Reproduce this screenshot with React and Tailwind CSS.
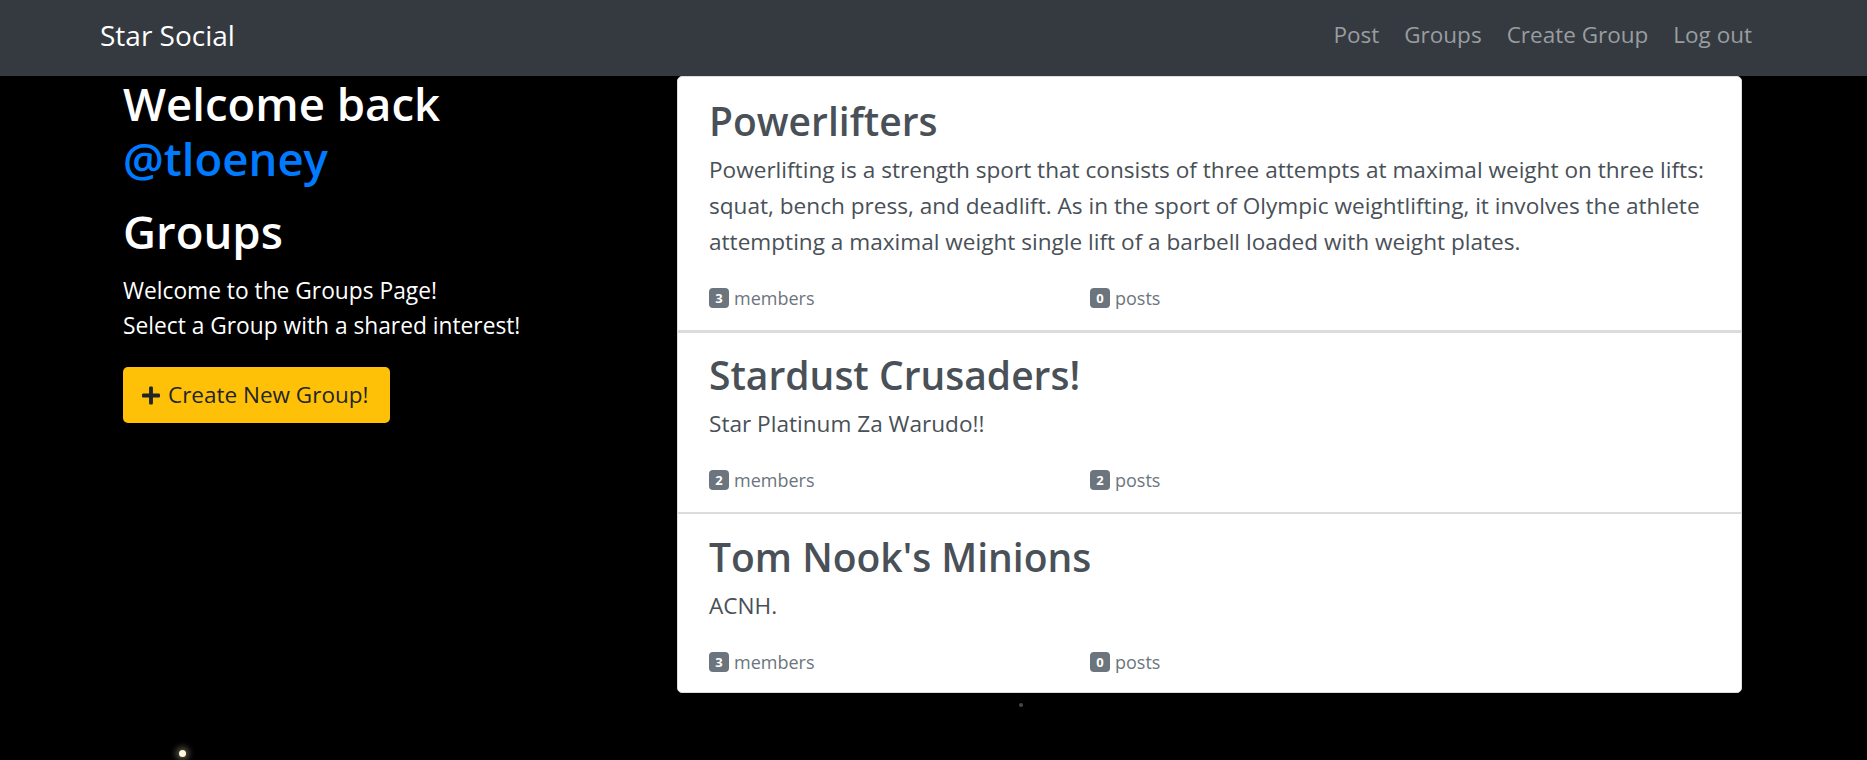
import React from 'react';

const groups = [
    {
        name: 'Powerlifters',
        description:
            'Powerlifting is a strength sport that consists of three attempts at maximal weight on three lifts: squat, bench press, and deadlift. As in the sport of Olympic weightlifting, it involves the athlete attempting a maximal weight single lift of a barbell loaded with weight plates.',
        members: 3,
        posts: 0,
    },
    { name: 'Stardust Crusaders!', description: 'Star Platinum Za Warudo!!', members: 2, posts: 2 },
    { name: "Tom Nook's Minions", description: 'ACNH.', members: 3, posts: 0 },
];

function PlusIcon() {
    return (
        <svg viewBox="0 0 448 512" className="h-[21px] w-[18px]" fill="currentColor">
            <path d="M416 208H272V64c0-17.67-14.33-32-32-32h-32c-17.67 0-32 14.33-32 32v144H32c-17.67 0-32 14.33-32 32v32c0 17.67 14.33 32 32 32h144v144c0 17.67 14.33 32 32 32h32c17.67 0 32-14.33 32-32V304h144c17.67 0 32-14.33 32-32v-32c0-17.67-14.33-32-32-32z" />
        </svg>
    );
}

function Badge({ value }) {
    return (
        <span className="inline-flex h-[20px] min-w-[20px] items-center justify-center rounded-[4px] bg-[#6c757d] px-[5px] text-[13px] font-bold leading-none text-white">
            {value}
        </span>
    );
}

export default function App() {
    const navLinks = ['Post', 'Groups', 'Create Group', 'Log out'];

    return (
        <div className="relative min-h-screen bg-black font-['Open_Sans',sans-serif]">
            {/* navbar */}
            <nav className="flex h-[76px] items-center justify-between bg-[#343a40] pb-[7px] pl-[100px] pr-[115px]">
                <span className="text-[28px] text-white">Star Social</span>
                <div className="flex items-center gap-[25px] text-[22.5px] text-[#9a9da0]">
                    {navLinks.map((link) => (
                        <span key={link}>{link}</span>
                    ))}
                </div>
            </nav>

            <main className="flex pl-[123px]">
                {/* left column */}
                <div className="w-[554px] shrink-0 text-white">
                    <h1 className="text-[45.5px] font-semibold leading-[55px]">
                        Welcome back
                        <br />
                        <span className="text-[#007bff]">@tloeney</span>
                    </h1>
                    <h1 className="mt-[18px] text-[45.5px] font-semibold leading-[55px]">Groups</h1>
                    <div className="mt-[14px] text-[22.75px] leading-[35px]">
                        <p>Welcome to the Groups Page!</p>
                        <p>Select a Group with a shared interest!</p>
                    </div>
                    <button
                        type="button"
                        className="mt-[24px] flex h-[56px] w-[267px] items-center gap-[8px] rounded-[5px] bg-[#ffc107] pl-[19px] text-[22.5px] text-[#212529]"
                    >
                        <PlusIcon />
                        Create New Group!
                    </button>
                </div>

                {/* groups list */}
                <div className="w-[1065px] shrink-0 overflow-hidden rounded-[5px] border border-[#dcdcdc] bg-white">
                    {groups.map((group, i) => (
                        <div
                            key={group.name}
                            className={
                                i === 0
                                    ? 'pb-[17px] pl-[31px] pr-[24px] pt-[20px]'
                                    : i === 1
                                      ? 'border-t-[3px] border-[#dcdcdc] pb-[17px] pl-[31px] pr-[24px] pt-[18px]'
                                      : 'border-t-2 border-[#dcdcdc] pb-[15px] pl-[31px] pr-[24px] pt-[19px]'
                            }
                        >
                            <h2 className="text-[39px] font-semibold leading-[48px] text-[#495057]">{group.name}</h2>
                            <p className="mt-[7px] text-[22.6px] leading-[36px] text-[#495057]">{group.description}</p>
                            <div className="mt-[23px] grid grid-cols-[381px_1fr] text-[18px] leading-[30px] text-[#6c757d]">
                                <div className="flex items-center gap-[5px]">
                                    <Badge value={group.members} />
                                    members
                                </div>
                                <div className="flex items-center gap-[5px]">
                                    <Badge value={group.posts} />
                                    posts
                                </div>
                            </div>
                        </div>
                    ))}
                </div>
            </main>

            {/* stars in the background */}
            <span className="absolute left-[1019px] top-[703px] h-[4px] w-[4px] rounded-full bg-[#4a4548]" />
            <span className="absolute left-[179px] top-[750px] h-[7px] w-[7px] rounded-full bg-[#fff6dc] shadow-[0_0_6px_3px_rgba(255,240,200,0.35)]" />
        </div>
    );
}
